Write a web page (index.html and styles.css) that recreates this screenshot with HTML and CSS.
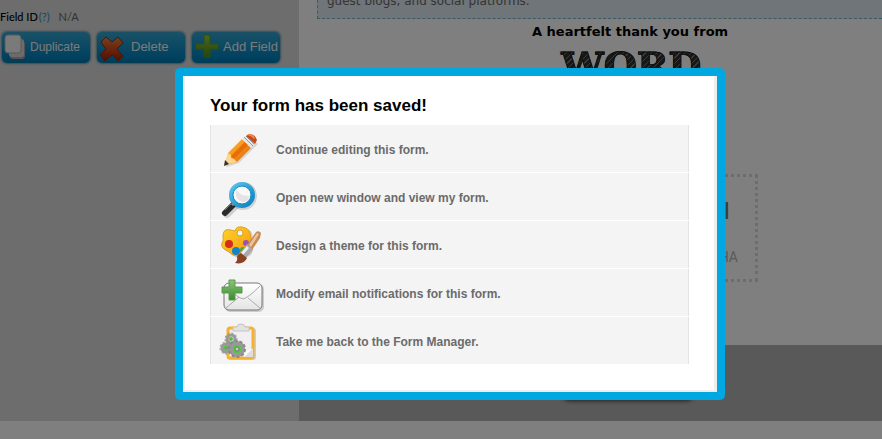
FILE: index.html
```html
<!DOCTYPE html>
<html lang="en">
<head>
<meta charset="utf-8">
<title>Form Builder</title>
<link rel="stylesheet" href="styles.css">
</head>
<body>
<div class="builder">
  <aside class="sidebar">
    <p class="field-id"><span class="field-label">Field ID</span> <a class="help" href="#">(?)</a> <span class="field-value">N/A</span></p>
    <div class="actions">
      <button class="action action-small" type="button">
        <svg width="28" height="31" viewBox="0 0 28 31"><rect x="8" y="10" width="15" height="18" rx="3" fill="#a8a8a8"/><rect x="7" y="8" width="15" height="18" rx="3" fill="#d8d8d8"/><rect x="3" y="4" width="16" height="18" rx="3" fill="#f4f4f4" stroke="#b5b5b5"/></svg>Duplicate
      </button>
      <button class="action" type="button">
        <svg width="34" height="31" viewBox="0 0 34 31"><defs><linearGradient id="cross" x2="0" y2="1"><stop stop-color="#e88840"/><stop offset=".45" stop-color="#d94f1c"/><stop offset="1" stop-color="#9e2208"/></linearGradient></defs><path d="M4 11 9 6l6 5 6-5 5 6-6 6 6 7-5 5-6-6-7 6-5-6 6-6z" fill="url(#cross)" stroke="#8e2a12" stroke-linejoin="round"/></svg>Delete
      </button>
      <button class="action" type="button">
        <svg width="31" height="31" viewBox="0 0 31 31"><defs><linearGradient id="add" x2="0" y2="1"><stop stop-color="#94cc42"/><stop offset="1" stop-color="#4c8a12"/></linearGradient></defs><path d="M12 4h6v9h8v5h-8v8h-6v-8H4v-5h8z" fill="url(#add)" stroke="#5d9c20" stroke-linejoin="round"/></svg>Add Field
      </button>
    </div>
  </aside>
  <main class="preview">
    <div class="canvas">
      <p class="notice">guest blogs, and social platforms.</p>
      <p class="thanks">A heartfelt thank you from</p>
      <p class="brand">WORD</p>
      <div class="captcha"><p class="captcha-mark">I</p><p class="captcha-label">CAPTCHA</p></div>
    </div>
    <div class="submit-bar"><button class="submit" type="button">Submit</button></div>
  </main>
</div>
<div class="overlay">
  <section class="dialog" role="dialog" aria-labelledby="dialog-title">
    <div class="dialog-body">
      <h1 class="dialog-title" id="dialog-title">Your form has been saved!</h1>
      <nav class="options">
        <a class="option" href="#">
          <svg class="icon" viewBox="0 0 64 47"><defs><linearGradient id="pencil" x1="0" y1="0" x2="1" y2="1"><stop stop-color="#ffc14d"/><stop offset=".45" stop-color="#f99518"/><stop offset="1" stop-color="#c95c04"/></linearGradient></defs><path d="m14 40 5-12L37 11l10 8-19 19-12 4z" fill="#000" opacity=".12"/><path d="M17 28 31 14l9 9-14 14-12 3z" fill="url(#pencil)"/><path d="m20 31 14-14 3 3-14 14z" fill="#e66d07"/><path d="m17 28 3 2v3l3 1 3 3-13 3z" fill="#ffd68c"/><path d="m14 35 4 4-5 2z" fill="#333"/><path d="m31 14 5-4 8 8-4 5z" fill="#e6e6e6"/><path d="m33 12 9 9m-7-10 8 8" stroke="#999" stroke-width="1"/><path d="m35 11 3-2q6 0 8 6l-2 4z" fill="#c54a1c"/><path d="m36 10 2-1q4 0 6 4l-1 1q-2-3-7-4" fill="#ef8b55"/></svg>
          <span>Continue editing this form.</span>
        </a>
        <a class="option" href="#">
          <svg class="icon" viewBox="0 0 64 47"><defs><linearGradient id="ring" x2="1" y2="1"><stop stop-color="#58c4ef"/><stop offset="1" stop-color="#0781c2"/></linearGradient></defs><path d="m25 32-9 9" stroke="#000" stroke-opacity=".15" stroke-width="8" stroke-linecap="round"/><path d="m23 31-9 9" stroke="#292929" stroke-width="6" stroke-linecap="round"/><path d="m20 31-6 6" stroke="#777" stroke-width="1"/><path d="m24 29-3 3" stroke="#aaa" stroke-width="3"/><circle cx="32" cy="23" r="14" fill="#000" opacity=".15"/><circle cx="31" cy="22" r="11" fill="#f9f9f9" stroke="url(#ring)" stroke-width="4"/><circle cx="31" cy="22" r="9" fill="none" stroke="#1a87c0" stroke-width="1"/><path d="M31 22 25 17q-2 8 6 12 7 0 8-6z" fill="#e4e4e8"/></svg>
          <span>Open new window and view my form.</span>
        </a>
        <a class="option" href="#">
          <svg class="icon" viewBox="0 0 64 47"><defs><linearGradient id="palette" x2="1" y2="1"><stop stop-color="#ffd42b"/><stop offset="1" stop-color="#f49a0b"/></linearGradient></defs><path d="M13 16q0-8 8-7l5 1q0-5 7-4 8 1 8 12v10q-1 8-12 8-7 0-11-5-8-3-6-8 2-2 1-7" fill="#000" opacity=".15" transform="translate(1 1)"/><path d="M12 15q0-8 8-6l4 1q1-5 7-4 9 1 9 12v9q-1 8-12 8-7 0-11-5-8-3-6-8 2-2 1-7" fill="url(#palette)" stroke="#e3a01c"/><circle cx="29" cy="12" r="3" fill="#f4f4f4" stroke="#d9a02a"/><circle cx="18" cy="23" r="4" fill="#d52c1b"/><circle cx="25" cy="30" r="4" fill="#1583c8"/><circle cx="35" cy="22" r="3" fill="#9854b5"/><circle cx="32" cy="29" r="3" fill="#49a53e"/><path d="m36 24 9-13q3-2 5 1l-1 5-8 12z" fill="#c98c58"/><path d="m38 24 8-12 2 1-8 13z" fill="#edc49a"/><path d="m36 23 6 6-7 8-6-5z" fill="#aaa"/><path d="m36 25 2 2-6 7-2-2z" fill="#eee"/><path d="m30 32 6 5q-3 7-12 5 3-2 2-6 1-3 4-4" fill="#8a4322"/></svg>
          <span>Design a theme for this form.</span>
        </a>
        <a class="option" href="#">
          <svg class="icon" viewBox="0 0 64 47"><defs><linearGradient id="mail" x2="0" y2="1"><stop stop-color="#fff"/><stop offset="1" stop-color="#e4e4e4"/></linearGradient><linearGradient id="plus" x2="0" y2="1"><stop stop-color="#8bc579"/><stop offset="1" stop-color="#398a2c"/></linearGradient></defs><rect x="14" y="15" width="39" height="28" rx="5" fill="#000" opacity=".16"/><rect x="13" y="14" width="38" height="27" rx="5" fill="url(#mail)" stroke="#777"/><path d="m15 39 13-11m21 11L37 29M16 18q11 11 16 12 5-1 17-13" fill="none" stroke="#aaa"/><path d="M18 11h6v7h7v6h-7v7h-6v-7h-7v-6h7z" fill="url(#plus)" stroke="#5a9a4e" stroke-linejoin="round"/></svg>
          <span>Modify email notifications for this form.</span>
        </a>
        <a class="option" href="#">
          <svg class="icon" viewBox="0 0 64 47"><rect x="17" y="11" width="28" height="32" rx="3" fill="#000" opacity=".16"/><rect x="17" y="11" width="25" height="30" rx="2" fill="#f1eff2" stroke="#f7b22c" stroke-width="3"/><path d="m33 40 9-9v9z" fill="#ddd"/><path d="m33 40 2-6 6-2z" fill="#fff"/><path d="M22 10h4q0-3 4-3t4 3h4v4H22z" fill="#e2e2e2" stroke="#c4c4c4"/><g fill="none"><circle cx="20" cy="22" r="4" stroke="#999" stroke-width="3"/><circle cx="20" cy="22" r="6" stroke="#888" stroke-width="1" stroke-dasharray="2 2"/><circle cx="20" cy="22" r="2" fill="#5bb851"/><circle cx="15" cy="31" r="4" fill="#57d044" stroke="#999" stroke-width="3"/><circle cx="15" cy="31" r="6" stroke="#888" stroke-width="1" stroke-dasharray="2 2"/><circle cx="26" cy="32" r="6" fill="#4ccc3c" stroke="#999" stroke-width="4"/><circle cx="26" cy="32" r="8" stroke="#888" stroke-width="2" stroke-dasharray="3 2"/><circle cx="26" cy="32" r="2" fill="#ccc" stroke="#777"/><circle cx="15" cy="31" r="1" fill="#ddd" stroke="#777"/></g></svg>
          <span>Take me back to the Form Manager.</span>
        </a>
      </nav>
    </div>
  </section>
</div>
</body>
</html>
```
FILE: styles.css
```css
* { box-sizing: border-box; }
body { margin: 0; background: #fff; font-family: "Liberation Sans", sans-serif; overflow: hidden; }
p, h1 { margin: 0; }

.builder { display: grid; grid-template-columns: 299px 1fr; }
.sidebar { background: #dadada; padding-top: 9px; }
.field-id { display: flex; font: 11px/16px Lato, sans-serif; color: #666; }
.field-label { color: #000; font-weight: 500; }
.help { color: #2a8fc8; text-decoration: none; margin: 0 9px 0 1px; }
.actions { display: flex; gap: 7px; padding: 7px 0 0 2px; }
.action {
  display: flex; align-items: center; width: 88px; height: 31px; padding: 0 0 2px;
  border: 0; border-radius: 5px; white-space: nowrap;
  background: linear-gradient(#34a4d0, #0082c0 85%, #0077a4);
  box-shadow: 0 0 2px 1px #6a9cb4;
  color: #f4f4f4; font: 13px/16px "Liberation Sans", sans-serif;
}
.action svg { flex: none; }
.action-small { font-size: 12px; }

.preview { display: flex; flex-direction: column; min-width: 0; }
.canvas { min-height: 345px; padding-left: 18px; }
.notice {
  padding: 0 9px 9px; height: 19px; display: flex; align-items: flex-end;
  background: #deeaf0; border: 1px dashed #70b8c8; border-width: 0 0 1px 1px;
  color: #686868; font: 12px/16px "DejaVu Sans", sans-serif;
}
.thanks { margin: 5px 0 0 215px; font: bold 13px/16px "DejaVu Sans", sans-serif; }
.brand {
  margin: 2px 0 0 244px; font: bold 38px/48px "DejaVu Serif", serif;
  background: repeating-linear-gradient(135deg, #303030 0 3px, #777 3px 4px);
  background-clip: text; color: transparent; -webkit-text-stroke: 1px #202020;
}
.captcha {
  width: 256px; height: 108px; margin: 84px 0 0 185px; padding: 18px 17px 0 0;
  border: 3px dotted #dadada; text-align: right; font-family: Roboto, sans-serif;
}
.captcha-mark { padding-right: 8px; font-size: 24px; line-height: 32px; color: #777; }
.captcha-label { padding-top: 20px; font-size: 14px; line-height: 20px; color: #b4b4b4; }
.submit-bar { background: #b2b2b2; height: 76px; padding: 15px 0 0 264px; }
.submit { width: 130px; height: 40px; border: 0; border-radius: 6px; background: #888; box-shadow: 0 1px 4px #444; }

.overlay {
  position: fixed; inset: 0; display: flex; justify-content: center; align-items: flex-start;
  padding: 68px 0 0 18px; background: rgba(0, 0, 0, .5);
}
.dialog { width: 100%; max-width: 550px; border: 8px solid #00a7e1; border-radius: 5px; background: #00a7e1; }
.dialog-body {
  padding: 20px 25px 26px; background: #fff;
  border: solid #eee; border-width: 0 3px 2px 2px;
}
.dialog-title { font-size: 17px; line-height: 20px; margin-bottom: 9px; color: #000; }
.options { display: grid; gap: 1px; }
.option {
  display: flex; align-items: center; height: 47px; padding-right: 8px;
  background: #f4f4f4; border: solid #e4e4e4; border-width: 0 1px;
  color: #6b6b6b; font-size: 12px; font-weight: bold; line-height: 16px; text-decoration: none;
}
.option span { padding: 2px 0 0 1px; }
.icon { width: 64px; height: 47px; flex: none; }
```
